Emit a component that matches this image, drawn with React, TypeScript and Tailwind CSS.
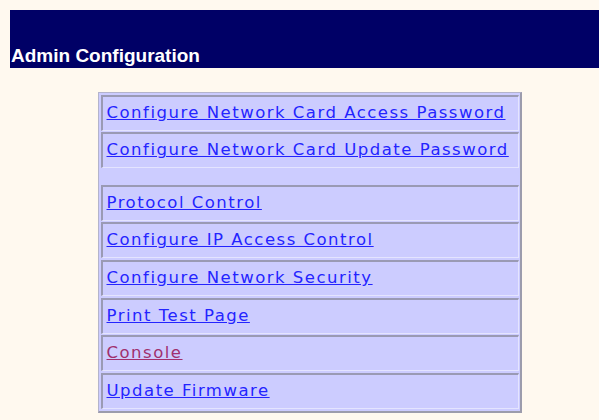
import * as React from "react";

type MenuLink = {
  label: string;
  visited?: boolean;
};

const topLinks: MenuLink[] = [
  { label: "Configure Network Card Access Password" },
  { label: "Configure Network Card Update Password" },
];

const mainLinks: MenuLink[] = [
  { label: "Protocol Control" },
  { label: "Configure IP Access Control" },
  { label: "Configure Network Security" },
  { label: "Print Test Page" },
  { label: "Console", visited: true },
  { label: "Update Firmware" },
];

const LinkCell = ({ label, visited }: MenuLink) => (
  <div className="h-[36px] flex items-center pl-[4px] border-t-2 border-l-2 border-b border-r border-t-[#9a9ab4] border-l-[#9a9ab4] border-b-[#e4e4ff] border-r-[#e4e4ff]">
    <a
      href="#"
      className={
        visited
          ? "underline text-[#a0306e] decoration-[#a0306e]"
          : "underline text-[#2424ff] decoration-[#2424ff]"
      }
    >
      {label}
    </a>
  </div>
);

const App = () => {
  return (
    <div className="w-[599px] h-[420px] bg-[#fff9ef] pt-[10px] pl-[10px] overflow-hidden">
      <div className="h-[58px] bg-[#000066] flex items-end pl-[1px] pb-[3px]">
        <span
          className="text-white font-bold text-[19px] leading-none"
          style={{ fontFamily: '"Liberation Sans", Arial, sans-serif' }}
        >
          Admin Configuration
        </span>
      </div>

      <div
        className="mt-[24px] ml-[88px] w-[424px] bg-[#ccccff] border-t border-l border-b-2 border-r-2 border-t-[#b4b4cc] border-l-[#b4b4cc] border-b-[#9c9cac] border-r-[#9c9cac] p-[1.5px] flex flex-col gap-[1.7px] text-[16.5px] tracking-[1.5px]"
        style={{ fontFamily: '"DejaVu Sans", Verdana, sans-serif' }}
      >
        {topLinks.map((link) => (
          <LinkCell key={link.label} {...link} />
        ))}
        <div className="h-[13px]" />
        {mainLinks.map((link) => (
          <LinkCell key={link.label} {...link} />
        ))}
      </div>
    </div>
  );
};

export default App;
